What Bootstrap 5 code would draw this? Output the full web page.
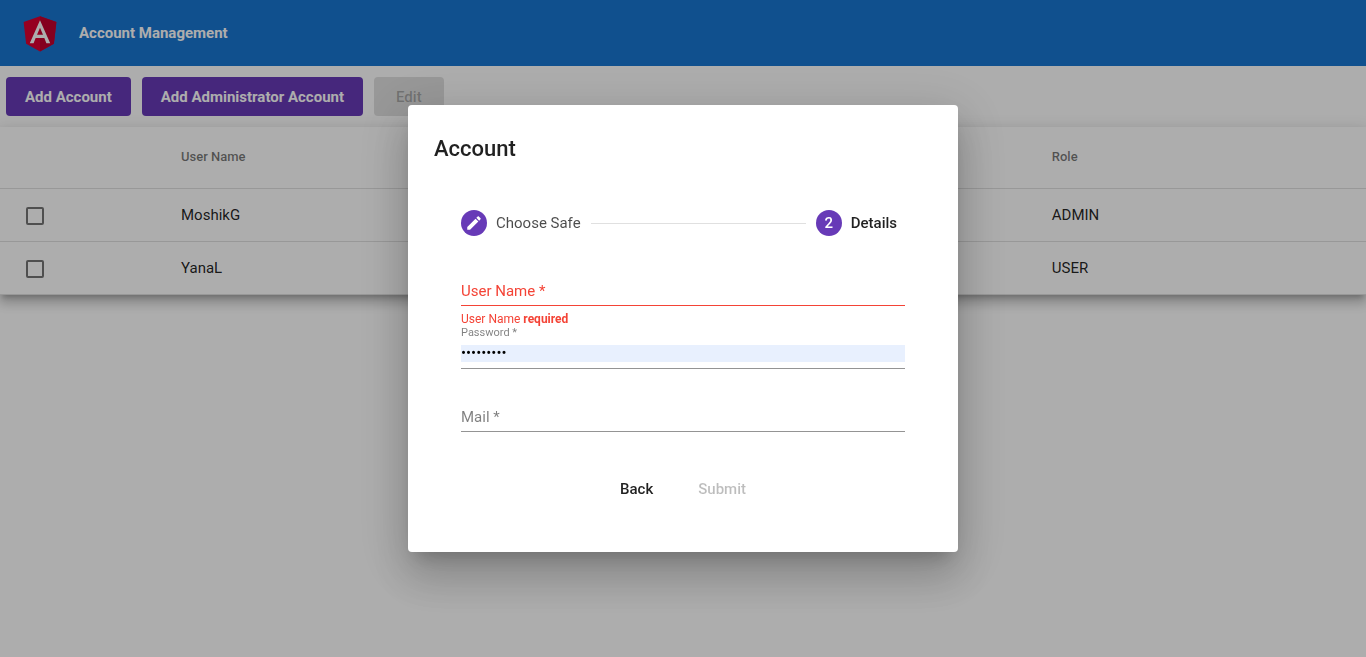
<!DOCTYPE html>
<html lang="en">
<head>
<meta charset="utf-8">
<meta name="viewport" content="width=device-width, initial-scale=1">
<title>Account Management</title>
<link href="https://cdn.jsdelivr.net/npm/bootstrap@5.3.0/dist/css/bootstrap.min.css" rel="stylesheet">
<style>
:root { --brand: #673ab7; --toolbar: #1976d2; --warn: #f44336; --ink: rgba(0,0,0,.87); --line: rgba(0,0,0,.12); --soft: rgba(0,0,0,.42); }
body { font-family: Roboto, "Liberation Sans", sans-serif; font-size: 15px; line-height: 20px; color: var(--ink); background: #fff; }
.app-bar { background: var(--toolbar); height: 66px; padding: 0 18px; gap: 17px; }
.app-title { color: #fff; font-size: 15px; font-weight: 700; }
.toolbar { padding: 11px 6px; gap: 11px; }
.btn-flat { --bs-btn-color: #fff; --bs-btn-bg: var(--brand); --bs-btn-border-width: 0; --bs-btn-hover-color: #fff; --bs-btn-hover-bg: #5e35b1; --bs-btn-font-size: 15px; --bs-btn-font-weight: 700; --bs-btn-padding-x: 19px; --bs-btn-padding-y: 0; --bs-btn-border-radius: 4px; --bs-btn-disabled-bg: rgba(0,0,0,.12); --bs-btn-disabled-color: rgba(0,0,0,.26); --bs-btn-disabled-opacity: 1; line-height: 37px; padding-top: 2px; }
.btn-narrow { --bs-btn-padding-x: 22px; --bs-btn-font-weight: 500; }
.btn-text { --bs-btn-color: var(--ink); --bs-btn-bg: transparent; --bs-btn-disabled-bg: transparent; --bs-btn-font-weight: 500; --bs-btn-padding-x: 17px; }
.sheet { background: #fff; box-shadow: 0 5px 5px -3px rgba(0,0,0,.2), 0 8px 10px 1px rgba(0,0,0,.14), 0 3px 14px 2px rgba(0,0,0,.12); }
.accounts { table-layout: fixed; margin: 0; color: var(--ink); }
.accounts th, .accounts td { padding: 0; vertical-align: middle; border-bottom: 1px solid var(--line); color: var(--ink); background: #fff; }
.accounts th { height: 61px; font-size: 13px; font-weight: 500; color: rgba(0,0,0,.54); }
.accounts td { height: 53px; }
.col-pick { width: 181px; }
.col-user { width: 63.75%; }
.pick { appearance: none; display: block; width: 18px; height: 18px; margin: 2px 0 0 26px; border: 2px solid rgba(0,0,0,.54); border-radius: 2px; background: transparent; }
.pick:checked { background: var(--brand); border-color: var(--brand); }
.modal-backdrop { --bs-backdrop-opacity: .32; }
.account-modal { --bs-modal-width: 550px; --bs-modal-border-width: 0; --bs-modal-border-radius: 4px; --bs-modal-padding: 26px; --bs-modal-color: var(--ink); }
.account-modal .modal-content { box-shadow: 0 12px 17px -8px rgba(0,0,0,.2), 0 26px 42px 3px rgba(0,0,0,.14), 0 10px 51px 9px rgba(0,0,0,.12); }
.dialog-title { font-size: 22px; line-height: 35px; font-weight: 500; margin-bottom: 18px; }
.stepper { height: 78px; padding: 0 35px 0 27px; gap: 10px; margin-bottom: 2px; }
.step-icon { width: 26px; height: 26px; border-radius: 50%; background: var(--brand); color: #fff; font-weight: 500; margin-right: 9px; }
.step-rule { height: 1px; background: var(--line); }
.step-name { color: rgba(0,0,0,.7); }
.step-name.current { color: var(--ink); font-weight: 500; }
.form-area { padding: 0 27px; }
.field { display: grid; grid-template-rows: 18px 24px 21px; }
.field label { color: rgba(0,0,0,.5); grid-area: 2 / 1; line-height: 19px; pointer-events: none; z-index: 1; }
.field.floated label { grid-row: 1; font-size: 11px; line-height: 12px; }
.field input { grid-area: 2 / 1; width: 100%; border: 0; outline: 0; border-bottom: 1px solid var(--soft); padding: 0 0 6px; background: transparent; color: #000; line-height: 17px; font-size: 15px; }
.field.invalid label, .field .error { color: var(--warn); }
.field.invalid input { border-color: var(--warn); }
.field .error { grid-area: 3 / 1; font-size: 12px; line-height: 16px; padding-top: 5px; }
.field.floated input { background: #e8f0fe content-box; }
.actions { padding: 16px 0 18px; gap: 11px; }
</style>
</head>
<body class="min-vh-100">
<header class="app-bar d-flex align-items-center">
  <svg width="44" height="44" viewBox="0 0 250 250" role="img" aria-label="Angular"><path fill="#dd0031" d="M125 30 31.900 63.200l14.200 123.100L125 230l78.900-43.700 14.200-123.100z"/><path fill="#c3002f" d="M125 30v200l78.900-43.700 14.200-123.100z"/><path fill="#fff" d="M125 52.100 66.800 182.600h21.700l11.700-29.200h49.400l11.700 29.200H183zm17 83.300h-34l17-40.900z"/></svg>
  <span class="app-title">Account Management</span>
</header>
<main>
  <div class="toolbar d-flex">
    <button type="button" class="btn btn-flat">Add Account</button>
    <button type="button" class="btn btn-flat">Add Administrator Account</button>
    <button type="button" class="btn btn-flat btn-narrow" disabled>Edit</button>
  </div>
  <div class="sheet">
    <table class="table accounts">
      <colgroup><col class="col-pick"><col class="col-user"><col></colgroup>
      <thead><tr><th scope="col"></th><th scope="col">User Name</th><th scope="col">Role</th></tr></thead>
      <tbody>
        <tr><td><input class="pick" type="checkbox" aria-label="Select MoshikG"></td><td>MoshikG</td><td>ADMIN</td></tr>
        <tr><td><input class="pick" type="checkbox" aria-label="Select YanaL"></td><td>YanaL</td><td>USER</td></tr>
      </tbody>
    </table>
  </div>
</main>
<div class="modal-backdrop show"></div>
<div class="modal account-modal show d-block" tabindex="-1" role="dialog" aria-modal="true" aria-labelledby="dialogTitle">
  <div class="modal-dialog modal-dialog-centered">
    <div class="modal-content">
      <div class="modal-body">
        <h1 class="dialog-title" id="dialogTitle">Account</h1>
        <div class="stepper d-flex align-items-center">
          <div class="d-flex align-items-center">
            <span class="step-icon d-flex align-items-center justify-content-center"><svg width="18" height="18" viewBox="0 0 24 24" fill="currentColor" aria-hidden="true"><path d="M3 17.250V21h3.750L17.810 9.940l-3.750-3.750L3 17.250zM20.710 7.040c.39-.39.39-1.020 0-1.410l-2.340-2.340c-.39-.39-1.020-.39-1.410 0l-1.830 1.830 3.750 3.750 1.830-1.830z"/></svg></span>
            <span class="step-name">Choose Safe</span>
          </div>
          <div class="step-rule flex-grow-1"></div>
          <div class="d-flex align-items-center">
            <span class="step-icon d-flex align-items-center justify-content-center">2</span>
            <span class="step-name current">Details</span>
          </div>
        </div>
        <form class="form-area" novalidate>
          <div class="field invalid">
            <label for="userName">User Name *</label>
            <input type="text" id="userName" required>
            <div class="error">User Name <strong>required</strong></div>
          </div>
          <div class="field floated">
            <label for="password">Password *</label>
            <input type="password" id="password" value="password1" required>
          </div>
          <div class="field">
            <label for="mail">Mail *</label>
            <input type="email" id="mail" required>
          </div>
          <div class="actions d-flex justify-content-center">
            <button type="button" class="btn btn-flat btn-text">Back</button>
            <button type="submit" class="btn btn-flat btn-text" disabled>Submit</button>
          </div>
        </form>
      </div>
    </div>
  </div>
</div>
<script src="https://cdn.jsdelivr.net/npm/bootstrap@5.3.0/dist/js/bootstrap.bundle.min.js"></script>
</body>
</html>
